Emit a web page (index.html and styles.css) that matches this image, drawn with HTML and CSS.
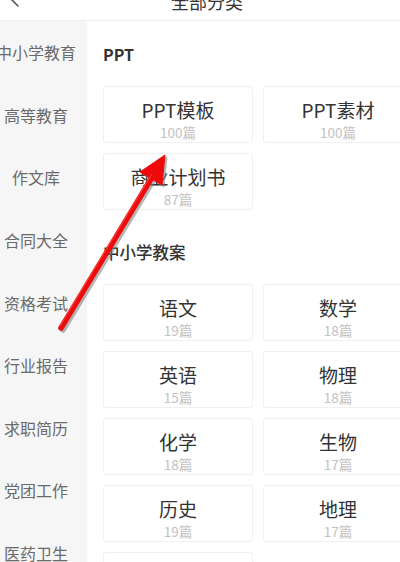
FILE: index.html
```html
<!DOCTYPE html>
<html lang="zh-CN">
<head>
    <meta charset="UTF-8">
    <meta name="viewport" content="width=device-width, initial-scale=1.0">
    <title>全部分类</title>
    <link rel="stylesheet" href="styles.css">
</head>
<body>
    <div class="page">
        <header class="topbar">
            <div class="topbar-inner">
                <span class="back">
                    <svg width="24" height="32" viewBox="0 0 24 32">
                        <polyline points="16,5 8,13 16,21" fill="none" stroke="#555" stroke-width="1.6" stroke-linecap="round" stroke-linejoin="round"/>
                    </svg>
                </span>
                <h1 class="title">全部分类</h1>
                <span></span>
            </div>
        </header>

        <div class="main">
            <!-- left category list -->
            <nav class="side">
                <div class="side-item">中小学教育</div>
                <div class="side-item">高等教育</div>
                <div class="side-item">作文库</div>
                <div class="side-item">合同大全</div>
                <div class="side-item">资格考试</div>
                <div class="side-item">行业报告</div>
                <div class="side-item">求职简历</div>
                <div class="side-item">党团工作</div>
                <div class="side-item">医药卫生</div>
            </nav>

            <section class="content">
                <div class="group">
                    <h2 class="group-title">PPT</h2>
                    <div class="cards">
                        <div class="card"><div class="card-name">PPT模板</div><div class="card-count">100篇</div></div>
                        <div class="card"><div class="card-name">PPT素材</div><div class="card-count">100篇</div></div>
                        <div class="card"><div class="card-name">商业计划书</div><div class="card-count">87篇</div></div>
                    </div>
                </div>

                <div class="group">
                    <h2 class="group-title big">中小学教案</h2>
                    <div class="cards">
                        <div class="card"><div class="card-name">语文</div><div class="card-count">19篇</div></div>
                        <div class="card"><div class="card-name">数学</div><div class="card-count">18篇</div></div>
                        <div class="card"><div class="card-name">英语</div><div class="card-count">15篇</div></div>
                        <div class="card"><div class="card-name">物理</div><div class="card-count">18篇</div></div>
                        <div class="card"><div class="card-name">化学</div><div class="card-count">18篇</div></div>
                        <div class="card"><div class="card-name">生物</div><div class="card-count">17篇</div></div>
                        <div class="card"><div class="card-name">历史</div><div class="card-count">19篇</div></div>
                        <div class="card"><div class="card-name">地理</div><div class="card-count">17篇</div></div>
                        <div class="card"><div class="card-name">政治</div><div class="card-count">16篇</div></div>
                    </div>
                </div>
            </section>
        </div>

        <!-- red annotation arrow drawn over the page -->
        <svg class="mark" width="400" height="562" viewBox="0 0 400 562">
            <g transform="translate(2,2)" fill="#7a7a7a" stroke="#7a7a7a" opacity="0.55">
                <line x1="61" y1="328" x2="154" y2="174" stroke-width="5.5" stroke-linecap="round"/>
                <polygon points="165,155 162,185 140,172" stroke-width="1"/>
            </g>
            <g fill="#ee0a0a" stroke="#ee0a0a">
                <line x1="61" y1="328" x2="154" y2="174" stroke-width="5.5" stroke-linecap="round"/>
                <polygon points="165,155 162,185 140,172" stroke-width="1" stroke-linejoin="round"/>
            </g>
            <line x1="60" y1="326" x2="152" y2="174" stroke="#ff6b6b" stroke-width="1" opacity="0.6"/>
        </svg>
    </div>
</body>
</html>
```

FILE: styles.css
```css
body {
    margin: 0;
    padding: 0;
    background-color: #fff;
    font-family: "Noto Sans CJK SC", "Noto Sans", sans-serif;
    overflow: hidden;
}
.page {
    position: relative;
    width: 400px;
    height: 562px;
    overflow: hidden;
}
.topbar {
    height: 20px;
    overflow: hidden;
    border-bottom: 1px solid #efefef;
}
.topbar-inner {
    display: grid;
    grid-template-columns: 40px 1fr 40px;
    align-items: center;
    height: 32px;
    margin-top: -15px;
}
.back {
    display: flex;
    padding-left: 2px;
}
.title {
    margin: 0;
    padding-left: 14px;
    text-align: center;
    font-size: 18px;
    font-weight: normal;
    line-height: 32px;
    color: #333;
}
.main {
    display: flex;
    height: 541px;
}
.side {
    width: 87px;
    flex-shrink: 0;
    background-color: #f6f6f6;
}
.side-item {
    display: flex;
    align-items: center;
    justify-content: center;
    height: 62.6px;
    width: 72px;
    white-space: nowrap;
    font-size: 16px;
    color: #6a6a6a;
}
.content {
    flex: 1;
    padding: 21px 0 0 16px;
    overflow: hidden;
}
.group + .group {
    margin-top: 30px;
}
.group-title {
    margin: 0 0 20px;
    height: 24px;
    line-height: 24px;
    font-size: 16px;
    font-weight: bold;
    color: #333;
}
.group-title.big {
    font-size: 16.5px;
    font-weight: 500;
}
.cards {
    display: grid;
    grid-template-columns: 150px 150px;
    gap: 10px;
}
.card {
    height: 57px;
    box-sizing: border-box;
    padding-top: 9px;
    border: 1px solid #f0f0f0;
    border-radius: 3px;
    text-align: center;
}
.card-name {
    font-size: 19px;
    line-height: 27px;
    color: #333;
}
.card-count {
    font-size: 13.5px;
    line-height: 19px;
    color: #c2c2c2;
}
.mark {
    position: absolute;
    left: 0;
    top: 0;
    pointer-events: none;
}
```
